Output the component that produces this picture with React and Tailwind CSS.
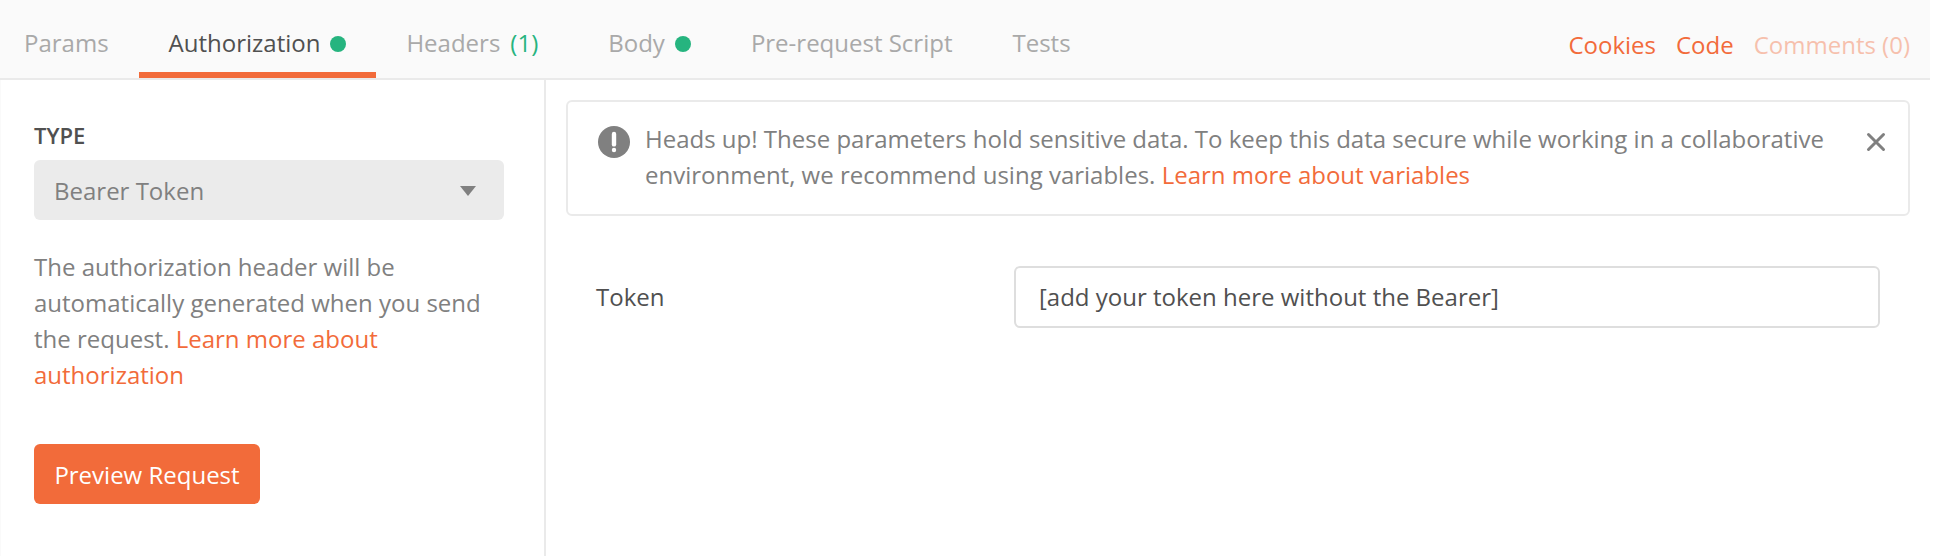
const tabs = [
  { label: "Params" },
  { label: "Authorization", dot: true, active: true },
  { label: "Headers", count: "(1)" },
  { label: "Body", dot: true },
  { label: "Pre-request Script" },
  { label: "Tests" },
];

function Tab({ label, dot, count, active }) {
  return (
    <button
      className={
        active
          ? "flex h-[78px] items-center border-b-[6px] border-[#f26b3a] px-[30px] pt-3.5 text-[#505050]"
          : "flex h-[78px] items-center border-b-[6px] border-transparent px-[30px] pt-3.5 text-[#a9a9a9]"
      }
    >
      <span>{label}</span>
      {count && <span className="mr-2.5 ml-2.5 text-[#26b47f]">{count}</span>}
      {dot && <span className="mt-0.5 ml-2.5 size-4 rounded-full bg-[#26b47f]" />}
    </button>
  );
}

function Header() {
  return (
    <header className="flex h-20 justify-between border-b-2 border-[#eaeaea] bg-[#fafafa] pr-5">
      <nav className="-ml-1.5 flex">
        {tabs.map((tab) => (
          <Tab key={tab.label} {...tab} />
        ))}
      </nav>
      <div className="flex items-center gap-5 pt-3 text-[#f26b3a]">
        <a>Cookies</a>
        <a>Code</a>
        <a className="opacity-40">Comments (0)</a>
      </div>
    </header>
  );
}

function Sidebar() {
  return (
    <aside className="flex w-[546px] shrink-0 flex-col items-start border-r-2 border-l border-r-[#eaeaea] border-l-[#fafafa] pt-[39px] pr-10 pl-[33px]">
      <div className="h-[41px] text-[22px] leading-8 font-semibold text-[#505050]">TYPE</div>
      <div className="flex h-[60px] w-[470px] items-center justify-between rounded-md bg-[#ebebeb] pt-0.5 pr-7 pl-5 text-[#808080]">
        <span>Bearer Token</span>
        <svg width="16" height="10" viewBox="0 0 16 10" fill="#808080">
          <path d="M0 0h16L8 10z" />
        </svg>
      </div>
      <p className="mt-[29px] w-[470px] text-[#808080]">
        The authorization header will be automatically generated when you send the request.{" "}
        <a className="text-[#f26b3a]">Learn more about authorization</a>
      </p>
      <button className="mt-[51px] h-[60px] w-[226px] rounded-md bg-[#f26b3a] pt-0.5 text-white">
        Preview Request
      </button>
    </aside>
  );
}

function Alert() {
  return (
    <div className="flex h-[116px] rounded-md border-2 border-[#eaeaea] pt-[19px] pr-[22px] pl-[30px] text-[#808080]">
      <svg className="mt-[5px] mr-[15px] shrink-0" width="32" height="32" viewBox="0 0 32 32">
        <circle cx="16" cy="16" r="16" fill="#808080" />
        <path d="M16 8v10.4" stroke="#fff" strokeWidth="4.4" strokeLinecap="round" />
        <circle cx="16" cy="24" r="2.2" fill="#fff" />
      </svg>
      <p className="w-[1200px]">
        Heads up! These parameters hold sensitive data. To keep this data secure while working in a
        collaborative environment, we recommend using variables.{" "}
        <a className="text-[#f26b3a]">Learn more about variables</a>
      </p>
      <svg className="mt-[11px] ml-auto shrink-0" width="20" height="20" viewBox="0 0 20 20">
        <path d="M2.5 2.5l15 15M17.5 2.5l-15 15" stroke="#808080" strokeWidth="3" strokeLinecap="round" />
      </svg>
    </div>
  );
}

export default function App() {
  return (
    <div className="w-[1934px] bg-white">
      <div className="flex h-[556px] w-[1930px] flex-col overflow-hidden font-['Open_Sans',sans-serif] text-[24px] leading-9">
        <Header />
        <div className="flex flex-1">
          <Sidebar />
          <main className="flex-1 pt-5 pr-5 pl-5">
            <Alert />
            <div className="mt-[50px] flex items-center justify-between pr-[30px] pl-[30px] text-[#505050]">
              <span>Token</span>
              <div className="flex h-[62px] w-[866px] items-center rounded-md border-2 border-[#dedede] px-[23px]">
                [add your token here without the Bearer]
              </div>
            </div>
          </main>
        </div>
      </div>
    </div>
  );
}
